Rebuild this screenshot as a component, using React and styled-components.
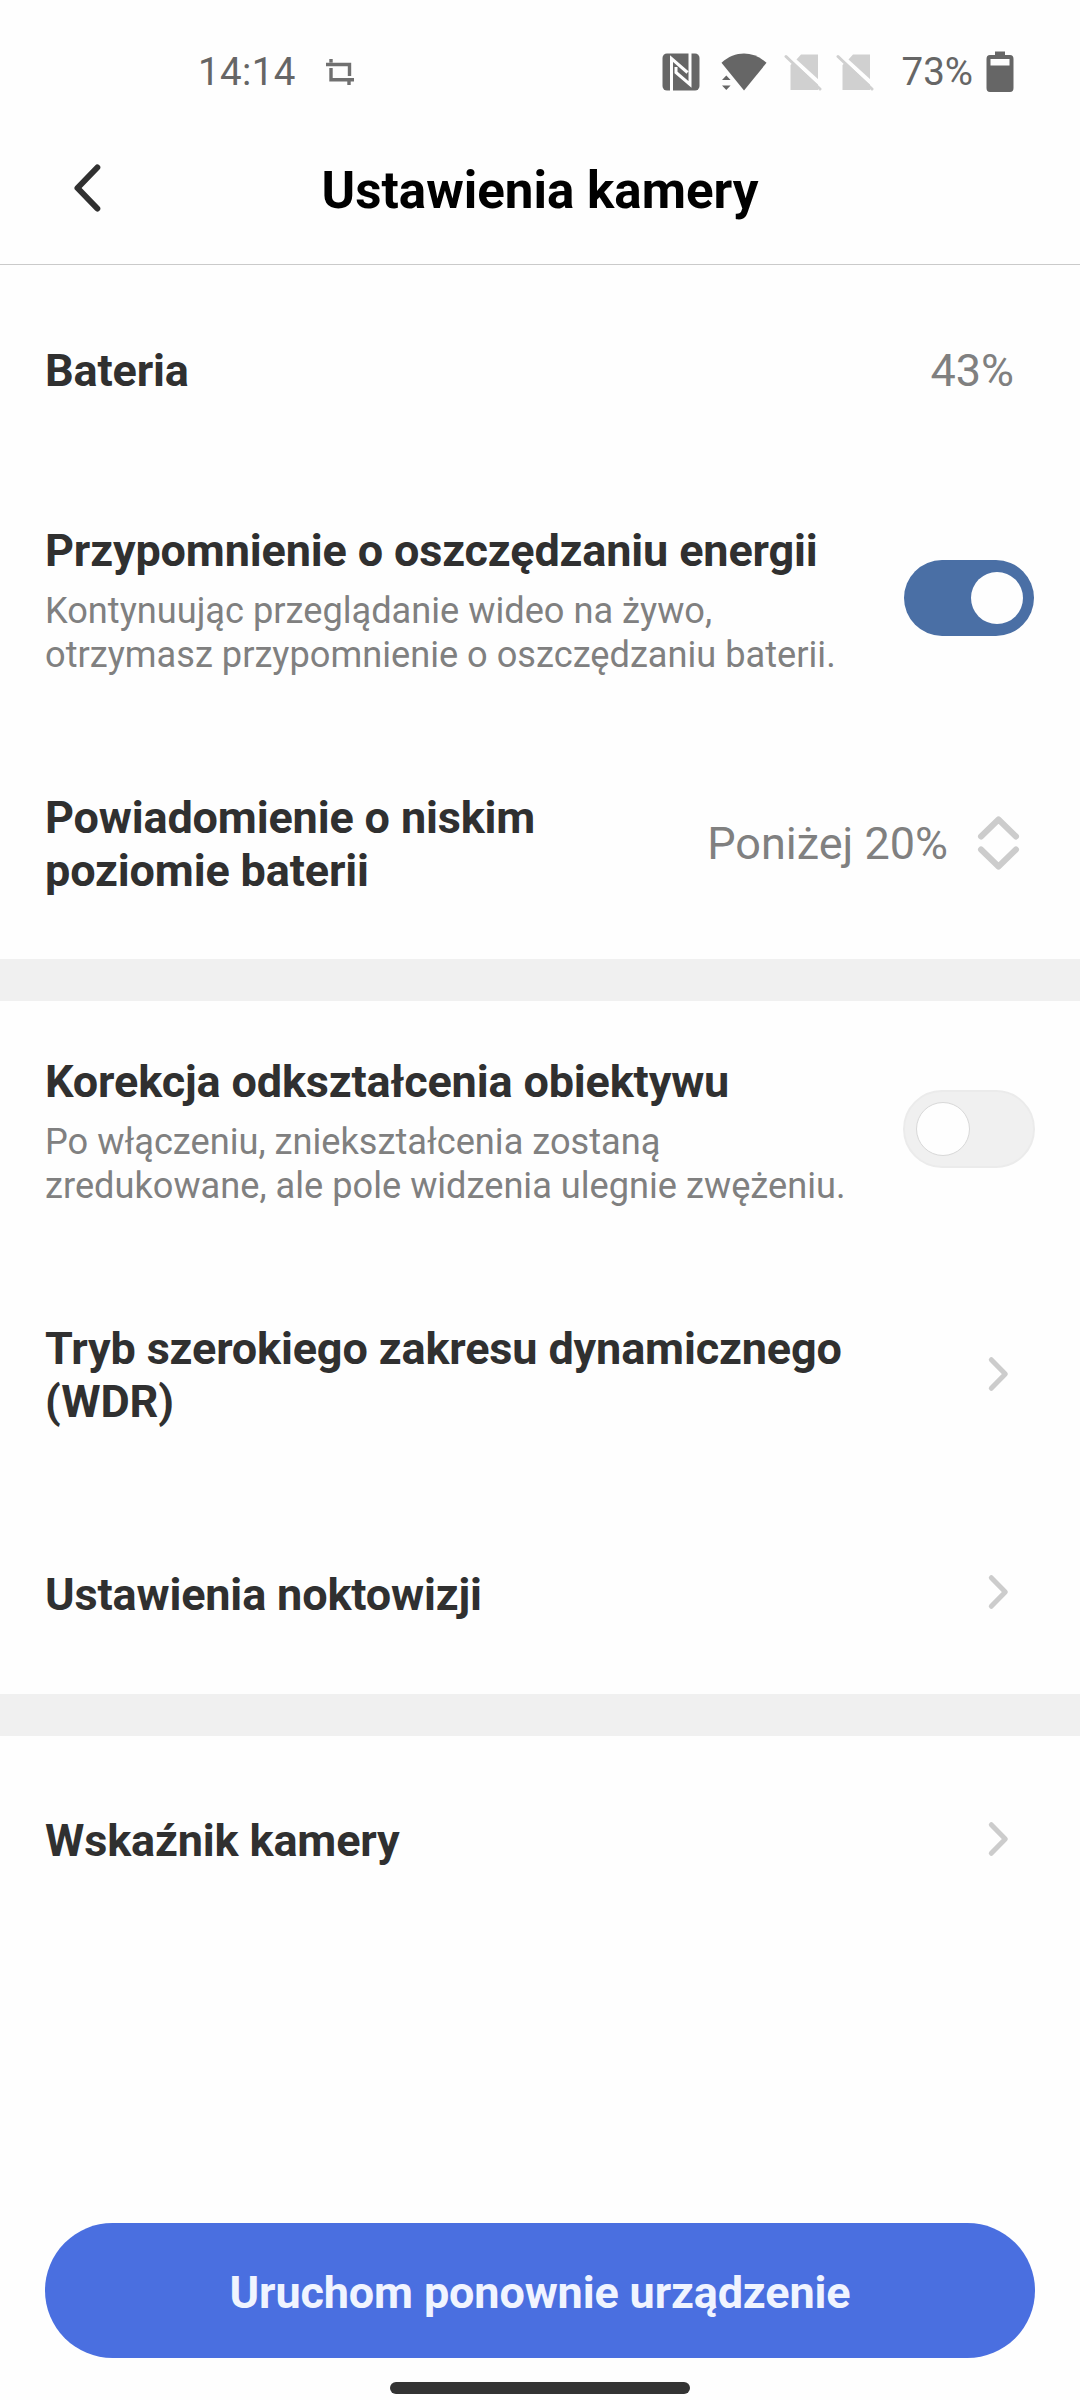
import React from "react";
import styled, { createGlobalStyle } from "styled-components";

const GlobalStyle = createGlobalStyle`
  * { box-sizing: border-box; }
  body { margin: 0; background: #fefefe; }
`;

const Screen = styled.div`
  width: 1080px;
  height: 2400px;
  display: flex;
  flex-direction: column;
  background: #fefefe;
  font-family: Roboto, "Liberation Sans", sans-serif;
  color: #303030;
  overflow: hidden;
`;

const StatusBar = styled.div`
  height: 144px;
  display: flex;
  align-items: center;
  padding: 0 66px 0 198px;
  color: #666;
`;

const StatusText = styled.span`
  font-size: 38.5px;
  line-height: 46px;
  letter-spacing: ${(p) => p.$spacing || 0}px;
  margin-left: ${(p) => p.$gap || 0}px;
`;

const StatusIcons = styled.div`
  display: flex;
  align-items: center;
  margin-left: auto;
`;

const Glyph = styled.svg`
  display: block;
  flex: none;
  margin-left: ${(p) => p.$gap || 0}px;
  margin-bottom: ${(p) => p.$lift || 0}px;
`;

const Header = styled.header`
  height: 121px;
  display: grid;
  grid-template-columns: 180px 1fr 180px;
  align-items: center;
  border-bottom: 1px solid #cacaca;
`;

const BackButton = styled.button`
  border: 0;
  padding: 0 0 33px 69px;
  background: none;
  display: flex;
`;

const Title = styled.h1`
  margin: 0;
  padding-bottom: 26px;
  text-align: center;
  font-size: 51.1px;
  line-height: 60px;
  font-weight: 700;
  color: #000;
`;

const Section = styled.section`
  padding-top: ${(p) => p.$top || 0}px;
`;

const Divider = styled.div`
  height: 42px;
  background: #f0f0f0;
`;

const Row = styled.div`
  height: ${(p) => p.$height}px;
  display: flex;
  align-items: center;
  justify-content: space-between;
  padding: 0 ${(p) => p.$right || 45}px 0 45px;
`;

const RowText = styled.div`
  width: ${(p) => p.$width || 830}px;
  padding-top: ${(p) => p.$top || 0}px;
`;

const Label = styled.div`
  font-size: 45px;
  line-height: 53px;
  font-weight: 700;
  letter-spacing: -0.15px;
`;

const Description = styled.div`
  margin-top: 12px;
  font-size: 36.2px;
  line-height: 44px;
  color: #808080;
`;

const Value = styled.div`
  display: flex;
  align-items: center;
  font-size: 45px;
  line-height: 53px;
  color: #808080;
`;

const Switch = styled.div`
  width: ${(p) => (p.$on ? 130 : 132)}px;
  height: ${(p) => (p.$on ? 76 : 78)}px;
  padding: 0 11px;
  border-radius: 39px;
  display: flex;
  align-items: center;
  justify-content: ${(p) => (p.$on ? "flex-end" : "flex-start")};
  background: ${(p) => (p.$on ? "#4a6fa5" : "#f0f0f0")};
  border: ${(p) => (p.$on ? "0" : "2px solid #ebebeb")};
`;

const Knob = styled.div`
  width: ${(p) => (p.$on ? 52 : 54)}px;
  height: ${(p) => (p.$on ? 52 : 54)}px;
  border-radius: 50%;
  background: #fefefe;
  border: ${(p) => (p.$on ? "0" : "1px solid #d8d8d8")};
`;

const Footer = styled.footer`
  margin-top: auto;
  display: flex;
  flex-direction: column;
  align-items: center;
  padding-bottom: 6px;
`;

const RestartButton = styled.button`
  width: 990px;
  height: 135px;
  border: 0;
  border-radius: 68px;
  padding: 4px 0 0;
  background: #4a6fe0;
  color: #f0f4ff;
  font: 700 45px/53px Roboto, "Liberation Sans", sans-serif;
  letter-spacing: -0.15px;
`;

const HomeBar = styled.div`
  width: 300px;
  height: 12px;
  margin-top: 24px;
  border-radius: 6px;
  background: #333;
`;

const Chevron = () => (
  <Glyph $lift={3} width="22" height="36" viewBox="0 0 22 36" fill="none" stroke="#ccc" strokeWidth="5" strokeLinecap="round" strokeLinejoin="round">
    <path d="M4.3 3.7 18.3 18 4.3 32.3" />
  </Glyph>
);

const UpDown = () => (
  <Glyph $gap={28} width="44" height="58" viewBox="0 0 44 58" fill="none" stroke="#ccc" strokeWidth="6" strokeLinecap="round" strokeLinejoin="round">
    <path d="M5 22.5 22.5 5.5 40 22.5M5 35.5 22.5 52.5 40 35.5" />
  </Glyph>
);

const CropIcon = () => (
  <Glyph $gap={30} width="28" height="28" viewBox="0 0 28 28" fill="none" stroke="#707070" strokeWidth="3.4">
    <path d="M0 6.5H23.5V18M5 1V4.5M5 10V21.8H28M23 23V27" />
  </Glyph>
);

const NfcIcon = () => (
  <Glyph width="38" height="38" viewBox="0 0 38 38">
    <rect x="0.5" y="0.5" width="37" height="37" rx="4.5" fill="#666" />
    <path d="M9.5 38V5.5L25.5 19.5M28 0V31.5L14 19.5V14" fill="none" stroke="#fefefe" strokeWidth="3" />
  </Glyph>
);

const WifiIcon = () => (
  <Glyph $gap={21} width="46" height="38" viewBox="0 0 46 38" fill="#666">
    <path d="M0.5 9.8C14-2.5 32-2.5 45.5 9.8L23 37.5Z" />
    <path d="M1 27 5.3 22.5 9.6 27ZM1 32.5H9.6L5.3 37Z" />
  </Glyph>
);

const NoSimIcon = ({ gap }) => (
  <Glyph $gap={gap} width="38" height="38" viewBox="0 0 38 38">
    <path d="M12 7 17 1.5H34V37H6.5V12Z" fill="#d0d0d0" />
    <path d="M3 0.5 38 32.5" stroke="#fefefe" strokeWidth="4" />
    <path d="M2 3.5 36 36" stroke="#d0d0d0" strokeWidth="3" strokeLinecap="round" />
  </Glyph>
);

const BatteryIcon = () => (
  <Glyph $gap={13} width="28" height="42" viewBox="0 0 28 42">
    <path d="M9 0.5H19V4H24Q27.5 4 27.5 8V37Q27.5 41 24 41H4Q0.5 41 0.5 37V8Q0.5 4 4 4H9Z" fill="#666" />
    <rect x="4.5" y="8" width="19" height="6.5" fill="#fefefe" />
  </Glyph>
);

export default function App() {
  return (
    <>
      <GlobalStyle />
      <Screen>
        <StatusBar>
          <StatusText $spacing={0.35}>14:14</StatusText>
          <CropIcon />
          <StatusIcons>
            <NfcIcon />
            <WifiIcon />
            <NoSimIcon gap={17} />
            <NoSimIcon gap={14} />
            <StatusText $gap={28}>73%</StatusText>
            <BatteryIcon />
          </StatusIcons>
        </StatusBar>
        <Header>
          <BackButton aria-label="Wstecz">
            <Glyph width="34" height="52" viewBox="0 0 34 52" fill="none" stroke="#303030" strokeWidth="6" strokeLinecap="round" strokeLinejoin="round">
              <path d="M28.3 5.5 8.5 26 28.3 46.5" />
            </Glyph>
          </BackButton>
          <Title>Ustawienia kamery</Title>
        </Header>
        <Section $top={6}>
          <Row $height={198} $right={66}>
            <Label>Bateria</Label>
            <Value>43%</Value>
          </Row>
          <Row $height={258} $right={46}>
            <RowText $top={5}>
              <Label>Przypomnienie o oszczędzaniu energii</Label>
              <Description>Kontynuując przeglądanie wideo na żywo,<br />otrzymasz przypomnienie o oszczędzaniu baterii.</Description>
            </RowText>
            <Switch $on><Knob $on /></Switch>
          </Row>
          <Row $height={232} $right={60}>
            <RowText $width={560} $top={2}>
              <Label>Powiadomienie o niskim<br />poziomie baterii</Label>
            </RowText>
            <Value>Poniżej 20%<UpDown /></Value>
          </Row>
        </Section>
        <Divider />
        <Section>
          <Row $height={256}>
            <RowText $top={5}>
              <Label>Korekcja odkształcenia obiektywu</Label>
              <Description>Po włączeniu, zniekształcenia zostaną<br />zredukowane, ale pole widzenia ulegnie zwężeniu.</Description>
            </RowText>
            <Switch><Knob /></Switch>
          </Row>
          <Row $height={236} $right={71}>
            <RowText>
              <Label>Tryb szerokiego zakresu dynamicznego<br />(WDR)</Label>
            </RowText>
            <Chevron />
          </Row>
          <Row $height={201} $right={71}>
            <RowText $top={2}>
              <Label>Ustawienia noktowizji</Label>
            </RowText>
            <Chevron />
          </Row>
        </Section>
        <Divider />
        <Section>
          <Row $height={208} $right={71}>
            <Label>Wskaźnik kamery</Label>
            <Chevron />
          </Row>
        </Section>
        <Footer>
          <RestartButton>Uruchom ponownie urządzenie</RestartButton>
          <HomeBar />
        </Footer>
      </Screen>
    </>
  );
}
